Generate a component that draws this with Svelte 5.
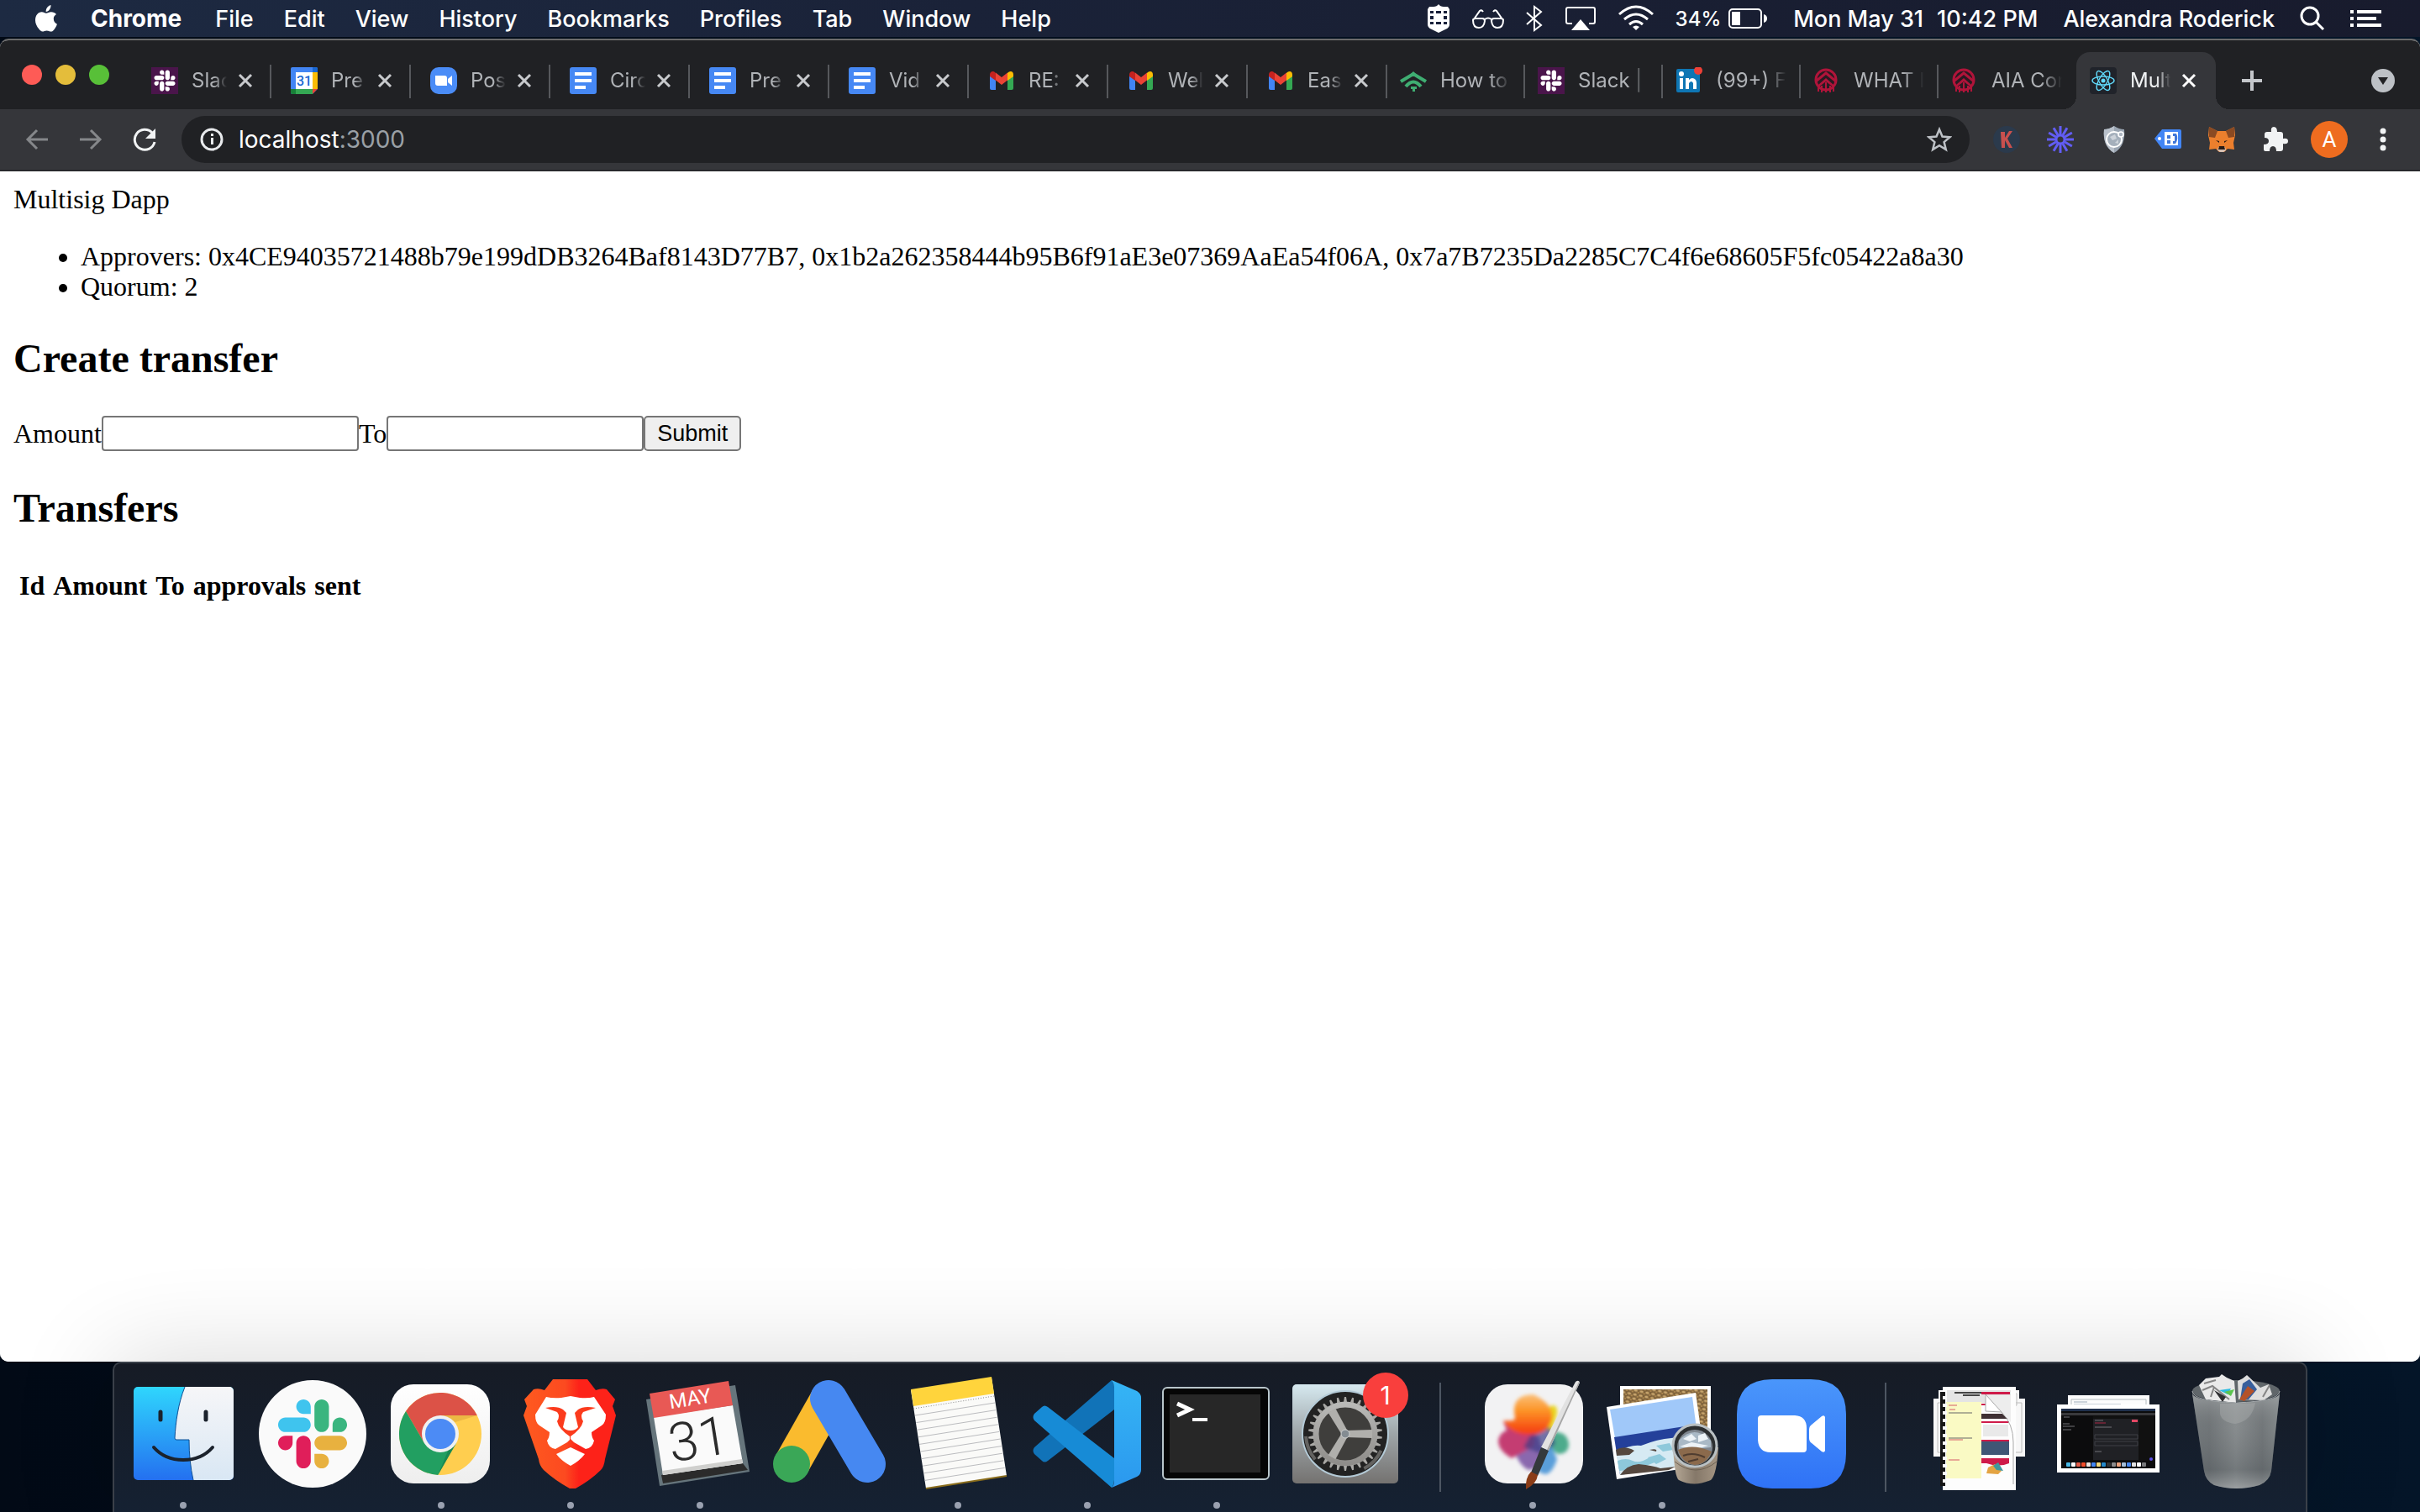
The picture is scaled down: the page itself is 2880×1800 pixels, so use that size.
<script>
  const menus = ['File', 'Edit', 'View', 'History', 'Bookmarks', 'Profiles', 'Tab', 'Window', 'Help'];

  const tabs = [
    { icon: 'slack', title: 'Slac', close: true },
    { icon: 'calendar', title: 'Pre', close: true },
    { icon: 'zoom', title: 'Pos', close: true },
    { icon: 'docs', title: 'Circ', close: true },
    { icon: 'docs', title: 'Pre', close: true },
    { icon: 'docs', title: 'Vid', close: true },
    { icon: 'gmail', title: 'RE:', close: true },
    { icon: 'gmail', title: 'Wel', close: true },
    { icon: 'gmail', title: 'Eas', close: true },
    { icon: 'tree', title: 'How to', close: false },
    { icon: 'slack', title: 'Slack |', close: false },
    { icon: 'linkedin', title: '(99+) F', close: false },
    { icon: 'aia', title: 'WHAT I', close: false },
    { icon: 'aia', title: 'AIA Cor', close: false },
    { icon: 'react', title: 'Mult', close: true, active: true }
  ];

  const approvers = [
    '0x4CE94035721488b79e199dDB3264Baf8143D77B7',
    '0x1b2a262358444b95B6f91aE3e07369AaEa54f06A',
    '0x7a7B7235Da2285C7C4f6e68605F5fc05422a8a30'
  ];
  const columns = ['Id', 'Amount', 'To', 'approvals', 'sent'];

  const slackPaths = [
    { d: 'M25.8 77.6c0 7.1-5.8 12.9-12.9 12.9S0 84.7 0 77.6s5.8-12.9 12.9-12.9h12.9v12.9zm6.5 0c0-7.1 5.8-12.9 12.9-12.9s12.9 5.8 12.9 12.9v32.3c0 7.1-5.8 12.9-12.9 12.9s-12.9-5.8-12.9-12.9V77.6z', c: '#e01e5a' },
    { d: 'M45.2 25.8c-7.1 0-12.9-5.8-12.9-12.9S38.1 0 45.2 0s12.9 5.8 12.9 12.9v12.9H45.2zm0 6.5c7.1 0 12.9 5.8 12.9 12.9s-5.8 12.9-12.9 12.9H12.9C5.8 58.1 0 52.3 0 45.2s5.8-12.9 12.9-12.9h32.3z', c: '#3fc4ee' },
    { d: 'M97 45.2c0-7.1 5.8-12.9 12.9-12.9s12.9 5.8 12.9 12.9-5.8 12.9-12.9 12.9H97V45.2zm-6.5 0c0 7.1-5.8 12.9-12.9 12.9s-12.9-5.8-12.9-12.9V12.9C64.7 5.8 70.5 0 77.6 0s12.9 5.8 12.9 12.9v32.3z', c: '#3ab57f' },
    { d: 'M77.6 97c7.1 0 12.9 5.8 12.9 12.9s-5.8 12.9-12.9 12.9-12.9-5.8-12.9-12.9V97h12.9zm0-6.5c-7.1 0-12.9-5.8-12.9-12.9s5.8-12.9 12.9-12.9h32.3c7.1 0 12.9 5.8 12.9 12.9s-5.8 12.9-12.9 12.9H77.6z', c: '#e8b13f' }
  ];

  const range = (n) => Array.from({ length: n }, (_, i) => i);

  const dock = [
    { name: 'Finder', icon: 'finder', running: true },
    { name: 'Slack', icon: 'slack' },
    { name: 'Google Chrome', icon: 'chrome', running: true },
    { name: 'Brave', icon: 'brave', running: true },
    { name: 'Calendar', icon: 'calendar', running: true },
    { name: 'Google Ads', icon: 'ads' },
    { name: 'Notes', icon: 'notes', running: true },
    { name: 'Visual Studio Code', icon: 'code', running: true },
    { name: 'Terminal', icon: 'terminal', running: true },
    { name: 'System Preferences', icon: 'settings' },
    { divider: true },
    { name: 'Pixelmator', icon: 'pixelmator', running: true },
    { name: 'Preview', icon: 'preview', running: true },
    { name: 'Zoom', icon: 'zoom' },
    { divider: true },
    { name: 'Documents', icon: 'documents' },
    { name: 'Screenshots', icon: 'screens' },
    { name: 'Trash', icon: 'trash' }
  ];
</script>

{#snippet favicon(kind)}
  <svg class="favicon" viewBox="0 0 32 32" aria-hidden="true">
    {#if kind === 'slack'}
      <rect width="32" height="32" fill="#4a154b" />
      <g transform="translate(3.5 3.5) scale(0.204)" fill="#fff">
        {#each slackPaths as p}<path d={p.d} />{/each}
      </g>
    {:else if kind === 'calendar'}
      <rect width="32" height="32" rx="2" fill="#4285f4" />
      <path d="M26 0h4a2 2 0 0 1 2 2v4h-6z" fill="#1967d2" />
      <path d="M26 6h6v20h-6z" fill="#fbbc04" />
      <path d="M26 26h6l-6 6z" fill="#ea4335" />
      <path d="M32 26v6h-6z" fill="#202124" />
      <path d="M6 26h20v6H6z" fill="#34a853" />
      <path d="M0 26h6v6H2a2 2 0 0 1-2-2z" fill="#188038" />
      <path d="M6 6h20v20H6z" fill="#fff" />
      <text x="16" y="22" text-anchor="middle" font-family="Roboto, sans-serif" font-size="16" font-weight="500" fill="#1967d2">31</text>
    {:else if kind === 'zoom'}
      <rect width="32" height="32" rx="10" fill="#4a8cf7" />
      <path d="M6 10h11a3 3 0 0 1 3 3v9H9a3 3 0 0 1-3-3zM21 14l5-4v12l-5-4z" fill="#fff" />
    {:else if kind === 'docs'}
      <rect width="32" height="32" rx="3" fill="#4688f4" />
      <path d="M6 6h20v4H6zM6 14h20v4H6zM6 22h13v4H6z" fill="#fff" />
    {:else if kind === 'gmail'}
      <path d="M2 9v16a2 2 0 0 0 2 2h5V14z" fill="#4285f4" />
      <path d="M23 27h5a2 2 0 0 0 2-2V9l-7 5z" fill="#34a853" />
      <path d="M2 9v0c0-4 4-5 6-3l1 1v9l-7-5z" fill="#c5221f" />
      <path d="M23 7l1-1c3-2 6-1 6 3v2l-7 5z" fill="#fbbc04" />
      <path d="M9 6.500l7 5.500 7-5.500V15.500l-7 5.500-7-5.500z" fill="#ea4335" />
    {:else if kind === 'tree'}
      <g fill="none" stroke="#3fae72" stroke-width="4">
        <path d="M1 17L16 8l15 9" />
        <path d="M7 23Q16 12 25 23" stroke-width="4" />
      </g>
      <path d="M16 5l6 6H10zM13 23h7v3h-7zM15 26h3v3h-3z" fill="#3fae72" />
    {:else if kind === 'linkedin'}
      <rect x="1" y="2" width="28" height="28" rx="2" fill="#0e76b4" />
      <path d="M5 13h4v13H5zM12 13h4v2q4-4 8 0 1 2 1 4v7h-4v-7q-2-4-5 0v7h-4z" fill="#fff" />
      <circle cx="7" cy="8" r="3" fill="#fff" />
      <circle cx="27" cy="4" r="5" fill="#ee4037" />
    {:else if kind === 'aia'}
      <circle cx="15" cy="15" r="12" fill="#2a1a22" stroke="#b0143a" stroke-width="3" />
      <path d="M4 14l11-9 11 9v4l-11-9-11 9zM6 21l9-8 9 8v3l-9-7-9 7z" fill="#b0143a" />
      <path d="M6 23v6M10 22v8M15 18v12M20 22v8M24 23v6" fill="none" stroke="#b0143a" stroke-width="2" />
    {:else}
      <rect width="32" height="32" rx="4" fill="#20232a" />
      <g fill="none" stroke="#61dafb" stroke-width="1.400">
        <ellipse cx="16" cy="16" rx="13" ry="5" />
        <ellipse cx="16" cy="16" rx="13" ry="5" transform="rotate(60 16 16)" />
        <ellipse cx="16" cy="16" rx="13" ry="5" transform="rotate(120 16 16)" />
      </g>
      <circle cx="16" cy="16" r="2.500" fill="#61dafb" />
    {/if}
  </svg>
{/snippet}

{#snippet dockIcon(kind)}
  <svg class="app-icon" viewBox="0 0 154 153" aria-hidden="true">
    {#if kind === 'finder'}
      <defs>
        <linearGradient id="fl" x2="0" y2="1"><stop stop-color="#2fd6fd" /><stop offset="1" stop-color="#2470f0" /></linearGradient>
        <linearGradient id="fr" x2="0" y2="1"><stop stop-color="#f6f6f8" /><stop offset="1" stop-color="#d9e7f4" /></linearGradient>
      </defs>
      <rect x="18" y="28" width="119" height="111" rx="5" fill="url(#fl)" />
      <path d="M79 28C71 48 68 70 67 89q0 2 2 2h15q0 26 5 48h43a5 5 0 0 0 5-5V33a5 5 0 0 0-5-5z" fill="url(#fr)" />
      <path d="M79 28C71 48 68 70 67 89q0 2 2 2h15q0 26 5 48" fill="none" stroke="#0d4f94" stroke-width="1" />
      <path d="M50 58v9M104 58v9" stroke="#1b222c" stroke-width="5" stroke-linecap="round" />
      <path d="M42 100q13 15 35 15t35-15" fill="none" stroke="#1b222c" stroke-width="4" stroke-linecap="round" />
    {:else if kind === 'slack'}
      <circle cx="77" cy="84" r="64" fill="#fafafa" />
      <g transform="translate(36 43) scale(0.668)">
        {#each slackPaths as p}<path d={p.d} fill={p.c} />{/each}
      </g>
    {:else if kind === 'chrome'}
      <defs><linearGradient id="cw" x2="0" y2="1"><stop stop-color="#fff" /><stop offset="1" stop-color="#eee" /></linearGradient></defs>
      <rect x="17" y="25" width="118" height="118" rx="27" fill="url(#cw)" />
      <g transform="translate(76 84)">
        <circle r="49" fill="#ffce4f" />
        <path d="M43.800-22A49 49 0 0 0-41-26.900L-19 11 0-22z" fill="#dc5247" />
        <path d="M-41-26.900A49 49 0 0 0-2.800 48.900L19 11-19 11z" fill="#229f61" />
        <path d="M0-22h43.800l-26 8z" fill="#d9a23a" opacity=".5" />
        <path d="M19 11L-2.800 48.900 10 18z" fill="#157c48" opacity=".6" />
        <circle r="22" fill="#f1f1f1" />
        <circle r="18" fill="#4c8bf5" />
      </g>
    {:else if kind === 'brave'}
      <defs><linearGradient id="bv"><stop stop-color="#ff5a1f" /><stop offset=".45" stop-color="#fc4a20" /><stop offset=".6" stop-color="#fd2219" /></linearGradient></defs>
      <path d="M56 19H97l10 13q8-3 13-1l10 12-3 8 4 11-13 52q-1 9-5 13-12 12-30 22h-7q-18-10-31-22-5-5-6-13L21 62l4-11-3-8 11-12q6-2 13 1z" fill="url(#bv)" />
      <path d="M48 40q8 2 18 1l11-2 11 2q10 1 17-1l14 21q0 10-5 13l-12 8q0 6 3 10-2 9-10 10l-14-8-4-4-4 4-14 8q-8-1-10-10 3-4 3-10l-12-8q-5-3-5-13z" fill="#fff" />
      <path d="M47 53q14-3 21 2l4 4-4 17q3 4 9 4t9-4l-4-17 4-4q7-5 21-2l-15 5q-4 5 0 11-2 9-15 18v6h-1v-6Q63 78 61 69q4-6 0-11z" fill="#fb3b1d" />
      <path d="M77 100l17 8q-6 8-17 14-11-6-17-14z" fill="#fff" />
    {:else if kind === 'calendar'}
      <path d="M13 43L119 26l17 103-107 17z" fill="#66757c" />
      <path d="M31 133l97-14 6 8-101 16z" fill="#2b2b2b" />
      <path d="M22 64l94-14 12 69-95 14z" fill="#fafafa" />
      <path d="M32 128l95-14 1 5-95 14z" fill="#cfcfcd" />
      <path d="M17 36l94-15 5 29-94 15z" fill="#e85955" />
      <g transform="rotate(-9 77 84)" text-anchor="middle" font-family="Roboto, sans-serif">
        <text x="72" y="49" font-size="24" fill="#fff">MAY</text>
        <text x="74" y="112" font-size="64" font-weight="300" fill="#2b2b2b">31</text>
      </g>
    {:else if kind === 'ads'}
      <path d="M76 42L32 120" stroke="#fabb2e" stroke-width="43" />
      <circle cx="32" cy="120" r="22" fill="#3aa757" />
      <path d="M76 42l46 78" stroke="#4688f1" stroke-width="44" stroke-linecap="round" />
    {:else if kind === 'notes'}
      <path d="M21 32l96-15 18 117-96 15z" fill="#fafaf8" />
      <path d="M39 149l96-15" stroke="#8a6d1c" stroke-width="2" />
      <path d="M21 31l96-15 3 20-96 15z" fill="#ffd43c" />
      <path d="M24 54l96-15" stroke="#888" stroke-width="1" stroke-dasharray="1 2" />
      {#each range(10) as i}
        <path d="M26 62l95-15" transform="translate({i * 1.3} {i * 8.6})" stroke="#bbbcbf" stroke-width="1" />
      {/each}
    {:else if kind === 'code'}
      <defs><linearGradient id="vs" x2="0" y2="1"><stop stop-color="#35b5f5" /><stop offset="1" stop-color="#2b98ee" /></linearGradient></defs>
      <path d="M106 20q5 4 3 35L30 116q-4 3-7 0l-9-8q-3-4 0-8z" fill="#1173b8" />
      <path d="M106 148q5-4 3-35L30 52q-4-3-7 0l-9 8q-3 4 0 8z" fill="#178bd6" />
      <path d="M106 20l30 13q5 3 5 8v86q0 5-5 8l-30 13q3-3 3-8V29q0-5-3-9z" fill="url(#vs)" />
    {:else if kind === 'terminal'}
      <rect x="13" y="29" width="126" height="109" rx="5" fill="#060606" stroke="#b9c6cb" stroke-width="2" />
      <path d="M21 37h108v93H21z" fill="#272727" />
      <path d="M30 48l15 7-15 7" fill="none" stroke="#fff" stroke-width="5" />
      <path d="M48 67h18" stroke="#fff" stroke-width="4" />
    {:else if kind === 'settings'}
      <defs>
        <linearGradient id="sg" x2="0" y2="1"><stop stop-color="#d6e9f0" /><stop offset=".5" stop-color="#9ea5a8" /><stop offset="1" stop-color="#747270" /></linearGradient>
        <linearGradient id="sr" x2="0" y2="1"><stop stop-color="#b9b9b7" /><stop offset="1" stop-color="#8f8d8a" /></linearGradient>
      </defs>
      <rect x="13" y="25" width="126" height="118" rx="5" fill="url(#sg)" />
      <circle cx="76" cy="84" r="51" fill="#222" stroke="#b4cad6" stroke-width="2" />
      <circle cx="76" cy="84" r="47" fill="none" stroke="#8f8e8b" stroke-width="4" stroke-dasharray="30 64 30 400" transform="rotate(25 76 84)" opacity=".6" />
      <circle cx="76" cy="84" r="34" fill="#3f3e3c" />
      <circle cx="76" cy="84" r="35" fill="none" stroke="url(#sr)" stroke-width="7" />
      {#each range(30) as i}
        <path d="M74 46l1-6h2l1 6z" fill="#aaa9a6" transform="rotate({i * 12} 76 84)" />
      {/each}
      {#each [0, 120, 240] as a}
        <path d="M76 80l32-1v10l-32-1z" fill="#b0afac" transform="rotate({a} 76 84)" />
      {/each}
      <circle cx="76" cy="84" r="5" fill="#848c92" stroke="#ced0d0" stroke-width="1" />
    {:else if kind === 'pixelmator'}
      <defs>
        <filter id="soft" x="-20%" y="-20%" width="140%" height="140%"><feGaussianBlur stdDeviation="2" /></filter>
        <linearGradient id="or" x2="0" y2="1"><stop stop-color="#fbc07a" /><stop offset=".4" stop-color="#fd9426" /><stop offset="1" stop-color="#f4380f" /></linearGradient>
      </defs>
      <rect x="20" y="25" width="117" height="118" rx="27" fill="#f2f2f3" />
      <g filter="url(#soft)">
        <path d="M96 52q11-6 10 8l-6 22-14-6z" fill="#e8d51f" />
        <path d="M100 82q18-2 20 14 0 12-13 12l-16-12z" fill="#4eab8c" />
        <path d="M80 98l20 2 6 14q-4 14-12 18-10 0-13-8z" fill="#5a9fda" />
        <path d="M52 96l32-10 6 24q-6 16-18 17-12-5-20-31z" fill="#8a68ae" />
        <path d="M42 69q14-2 40 6l-4 24-26 14Q36 104 36 92q2-10 10-12z" fill="#c43e72" />
        <path d="M76 82l22-6 6 20-16 12-22-8z" fill="#3a3c86" opacity=".7" />
        <path d="M42 68q14 2 14-3-6-28 22-28 24 12 22 28-4 18-24 20-24 1-34-17z" fill="url(#or)" />
      </g>
      <path d="M128 22q4-3 5 1L96 104l-9-4z" fill="#e2e2e2" />
      <path d="M132 22l1 1L96 104l-2-1z" fill="#a6a6a6" />
      <path d="M87 100l9 4-13 30-8-4z" fill="#34393d" />
      <path d="M75 129l8 4q-1 10-14 17-1-14 6-21z" fill="#8a3c17" />
    {:else if kind === 'preview'}
      <defs>
        <linearGradient id="pb"><stop stop-color="#b7aa98" /><stop offset=".5" stop-color="#857869" /><stop offset="1" stop-color="#a59684" /></linearGradient>
        <pattern id="peb" width="7" height="5" patternUnits="userSpaceOnUse" patternTransform="rotate(12)"><rect width="7" height="5" fill="#7d6039" /><ellipse cx="2.500" cy="2" rx="2.300" ry="1.500" fill="#c8a56c" /><ellipse cx="6" cy="4" rx="1.500" ry="1" fill="#b08a50" /></pattern>
      </defs>
      <path d="M27 27h108v85H27z" fill="#fff" />
      <path d="M31 31h100v81H31z" fill="url(#peb)" />
      <path d="M11 52l106-17 12 86-106 17z" fill="#fff" />
      <path d="M15 55l98-15 5 38-97 11z" fill="#a0c8f9" />
      <path d="M20 88l97-15 7 44-97 16z" fill="#24409a" />
      <path d="M22 106q18-10 30-8 20-8 36-9l32-5 5 34-98 15z" fill="#d6eaf3" />
      <path d="M24 116q10-4 18 0t20-4l6 6-20 8-22 2zM70 98l16-3 4 8-12 2zM60 112l14-4 8 6-12 6z" fill="#5db3cc" opacity=".6" />
      <path d="M22 103q10-6 22 1l-6 5-15 1zM27 133q8-12 22-13 18 2 26 5l18-2-8 4zM62 103q10-2 8 2z" fill="#55483f" />
      <path d="M90 100q2 36 7 39 18 9 38 0 7-6 9-39z" fill="url(#pb)" />
      <path d="M92 117q25 20 50 0" fill="none" stroke="#6e6253" />
      <ellipse cx="116" cy="98" rx="26" ry="25" fill="#2c2f31" stroke="#bac1c4" stroke-width="3" />
      <circle cx="116" cy="100" r="21" fill="#7f8790" />
      <path d="M97 92q18-20 38 0l0 8-38 4z" fill="#a9b9c6" />
      <path d="M102 90l10-6 6 6-8 3zM120 94l12-4-4-7-8 3zM98 99l14-5 20 4-14 4z" fill="#edf3f7" />
      <path d="M96 103q18-8 40 2-6 15-20 16-15-2-20-18z" fill="#8b6a4c" />
      <path d="M102 110q12-5 26 2M108 117l12-3" fill="none" stroke="#4f3d30" stroke-width="2" />
    {:else if kind === 'zoom'}
      <defs><linearGradient id="zm" x2="0" y2="1"><stop stop-color="#4a96fb" /><stop offset="1" stop-color="#2f72f6" /></linearGradient></defs>
      <path d="M54 19h46q42 0 42 42v46q0 42-42 42H54q-42 0-42-42V61q0-42 42-42z" fill="url(#zm)" />
      <path d="M41 62h40q14 1 14 15v25q0 4-4 4H52q-14 0-15-15V66q0-4 4-4zM98 79q0-4 3-6l12-10q3-2 4 1v40q-1 3-4 1l-12-10q-3-2-3-6z" fill="#fff" />
    {:else if kind === 'documents'}
      <path d="M23 42h109v69H23zM29 32h96v20H29z" fill="#f7f7f7" />
      <path d="M28 47h100v59H28zM32 36h90v14H32z" fill="none" stroke="#bcbcbc" />
      <path d="M34 28h87v123H34z" fill="#fdfdfd" />
      <path d="M39 32h76v15H39z" fill="#e4e4e4" />
      <path d="M48 35h34M58 38h20" stroke="#444" stroke-width="2" />
      <path d="M38 46h42v91H38z" fill="#fafac4" />
      <path d="M41 50h10M42 55h7M41 91h17M41 115h13" stroke="#d55a68" stroke-width="1" />
      <path d="M41 59h28M41 89h28" stroke="#666" />
      <path d="M80 34h34v3H80z" fill="#cf1b49" />
      <path d="M80 48h33v2H80zM80 69h33v2H80zM80 91h33v2H80zM80 113h33v6q-12 5-27 0h-6z" fill="#cf1b49" />
      <path d="M80 60h33v6H80z" fill="#3f3033" />
      <path d="M82 73h30v14H82z" fill="#e9e9e9" />
      <path d="M80 93h33v16H80z" fill="#3f5675" />
      <path d="M88 124l8-4 8 8-4 4-14-1z" fill="#e4a443" />
      <path d="M94 122l6-4 6 10-8-1z" fill="#40979c" />
      <path d="M83 38l32 32V38z" fill="#ededed" />
      <path d="M85 37v20l19 1z" fill="#fff" stroke="#aaa" />
      <path d="M104 58q14 14 14 36v50" fill="none" stroke="#aaa" />
      <path d="M31 34h6v112h-6z" fill="#161616" />
      {#each range(12) as i}<rect x="34" y={39 + i * 9} width="5" height="4" fill="#fafafa" />{/each}
    {:else if kind === 'screens'}
      <path d="M30 38h97v20H30z" fill="#fcfcfc" />
      <path d="M34 43h89v8H34z" fill="none" stroke="#b4bcc0" />
      <path d="M37 46h16M37 49h56" stroke="#9cabb8" />
      <path d="M17 49h122v81H17z" fill="#fff" />
      <path d="M22 54h112v71H22z" fill="#0c0c0d" />
      <path d="M22 54h112v3H22z" fill="#20304c" />
      <path d="M22 59h112v3H22z" fill="#39393c" />
      <path d="M42 63h91v53H60V63z" fill="#111" />
      <path d="M60 66h54v49H60z" fill="#202125" />
      <path d="M62 68h10M62 76h20M25 64h7M24 72h8M24 75h14M24 79h10M62 105h8" stroke="#737378" />
      <path d="M62 85h51v5H62zM62 93h51v5H62z" fill="none" stroke="#3e4047" />
      <path d="M106 67h7v3h-7z" fill="#e54865" />
      <path d="M62 71h13" stroke="#aa2945" />
      <circle cx="129" cy="114" r="2" fill="#5c50e8" />
      {#each ['#47b8e6', '#fff', '#df5a47', '#f14c29', '#ece2dc', '#4285f4', '#f0d67b', '#2489ca', '#333', '#8b8b8b', '#e9a07b', '#a4bdd7', '#4585ed', '#e1e1e1', '#fff', '#77787a'] as c, i}
        <rect x={28 + i * 6} y="118" width="5" height="5" rx="1" fill={c} />
      {/each}
    {:else}
      <defs>
        <linearGradient id="tr"><stop stop-color="#777d80" /><stop offset=".2" stop-color="#72777a" /><stop offset=".5" stop-color="#8f9496" /><stop offset=".8" stop-color="#74797c" /><stop offset="1" stop-color="#8a9092" /></linearGradient>
        <linearGradient id="tb" x2="0" y2="1"><stop stop-color="#a5a9ab" stop-opacity=".7" /><stop offset=".35" stop-color="#6a6e70" stop-opacity=".2" /><stop offset=".8" stop-color="#4a5054" stop-opacity=".4" /><stop offset="1" stop-color="#a9adaf" stop-opacity=".5" /></linearGradient>
      </defs>
      <ellipse cx="76" cy="33" rx="52" ry="13" fill="#60666a" />
      <path d="M32 26l8-8 16-2 3-3 6 4 9 4 2 26-36-4z" fill="#e9e9e9" />
      <path d="M79 43l-1-22 6-3 5-4 16 15 10-4 4 12-10 7z" fill="#dedede" />
      <path d="M56 32l14-2-4 7z" fill="#2dbce0" />
      <path d="M62 34l12-3-4 8z" fill="#5cc44e" />
      <path d="M84 24l8-5 9 12-10 12-10 0z" fill="#385f9c" />
      <path d="M90 27l8 6-12 12-6-2z" fill="#b4522a" />
      <path d="M38 24l14-4M36 32l12-5 20 16M46 40l4-12M108 40l8-14" stroke="#858585" stroke-width="2" fill="none" />
      <path d="M50 32l14 8-4 6z" fill="#2f2f31" />
      <path d="M24 36q2 9 52 11 50-2 52-11L118 128q-2 12-14 17-28 8-54 0-10-5-12-17z" fill="url(#tr)" />
      <path d="M24 36q2 9 52 11 50-2 52-11L118 128q-2 12-14 17-28 8-54 0-10-5-12-17z" fill="url(#tb)" />
      <path d="M24 33q0 12 52 14 52-2 52-14" fill="none" stroke="#a6abad" stroke-width="1" />
      <path d="M57 48q36 0 42-1-4 22-24 25-16-2-18-12z" fill="#b4b6b7" opacity=".35" />
    {/if}
  </svg>
{/snippet}

<div class="desktop">
  <nav class="menubar" aria-label="Menu bar">
    <button class="apple" aria-label="Apple menu">
      <svg viewBox="0 0 26 32" width="26" height="32"><path d="M18.500 0c.2 2.700-.8 4.800-2.200 6.200-1.200 1.300-2.700 1.800-3.600 1.700-.3-2 .7-4.300 2-5.700C15.800 1 17.400.2 18.500 0zM25 10.900c-2.300 1.500-3.300 3.300-3.200 5.700.1 2.900 1.500 4.900 4.100 6.100-.7 2.200-1.900 4.300-3.300 6.200-1.200 1.600-2.400 2.600-4 2.600-1.900 0-2.700-1.100-5-1.100s-3.300 1.100-5 1.100-3-1.200-4.200-2.900C1.800 25.300 0 21.800 0 18.200c0-6.200 3.600-9.900 7.600-9.900 2.200 0 4 1.400 5.300 1.400 1.500 0 3.500-1.500 6-1.500 2.400 0 4.600 1 6.100 2.700z" fill="#fff" /></svg>
    </button>
    <button class="strong">Chrome</button>
    {#each menus as m}<button>{m}</button>{/each}
    <span class="spacer"></span>
    <div class="extras">
      <div class="status">
        <svg viewBox="0 0 28 34" width="28" height="34"><path d="M14 0q2 3 6 3h5l2 3v18q0 4-5 6l-8 4-8-4q-5-2-5-6V6l2-3h5q4 0 6-3z" fill="#fff" /><path d="M4 8h4v3H4zM11 8h6v3h-6zM20 8h4v3h-4zM4 14h4v4H4zM20 14h4v4h-4zM4 21h4v3H4zM11 21h6v3h-6zM20 21h4v3h-4z" fill="#18203a" /></svg>
        <svg viewBox="0 0 38 34" width="38" height="34" fill="none" stroke="#fff" stroke-width="2"><path d="M1 19q0-2 3-2h8q3 0 3 3-1 8-7 8-7 0-7-9zM37 19q0-2-3-2h-8q-3 0-3 3 1 8 7 8 7 0 7-9zM15 18q4-3 8 0M2 18l7-10q2-2 4 1M36 18L29 8q-2-2-4 1" /></svg>
        <svg viewBox="0 0 20 34" width="20" height="34" fill="none" stroke="#fff" stroke-width="2"><path d="M1 10l17 15-8 6V3l8 6L1 24" /></svg>
        <svg viewBox="0 0 38 34" width="38" height="34"><path d="M9 23H4a2 2 0 0 1-2-2V6a2 2 0 0 1 2-2h30a2 2 0 0 1 2 2v15a2 2 0 0 1-2 2h-5" fill="none" stroke="#fff" stroke-width="2" /><path d="M19 18l11 13H8z" fill="#fff" /></svg>
        <svg viewBox="0 0 42 34" width="42" height="34" fill="none" stroke="#fff" stroke-width="3"><path d="M1 12q20-18 40 0M7 18q14-12 28 0M13 24q8-7 16 0" /><path d="M17 27q4-3 8 0l-4 4z" fill="#fff" stroke="none" /></svg>
        <span class="battery"><span>34%</span>
          <svg viewBox="0 0 48 26" width="48" height="26"><rect x="2" y="2" width="38" height="22" rx="4" fill="none" stroke="#fff" stroke-width="2" /><path d="M5 5h10v16H5zM43 8q4 1 4 5t-4 5z" fill="#fff" /></svg>
        </span>
      </div>
      <time class="clock"><span>Mon May 31</span><span>10:42 PM</span></time>
      <button>Alexandra Roderick</button>
      <button aria-label="Spotlight">
        <svg viewBox="0 0 30 30" width="30" height="30" fill="none" stroke="#fff" stroke-width="3"><circle cx="12" cy="12" r="10" /><path d="M19 19l9 9" /></svg>
      </button>
      <button aria-label="Notification Center">
        <svg viewBox="0 0 37 22" width="37" height="22" fill="#fff"><path d="M0 1h4v4H0zM8 1h29v4H8zM0 9h4v4H0zM8 9h23v4H8zM0 17h4v4H0zM8 17h29v4H8z" /></svg>
      </button>
    </div>
  </nav>

  <div class="window">
    <header class="strip">
      <div class="lights">
        <button class="light red" aria-label="Close window"></button>
        <button class="light yellow" aria-label="Minimise window"></button>
        <button class="light green" aria-label="Zoom window"></button>
      </div>
      <div class="tabs">
        {#each tabs as t, i}
          <div class="tab" class:narrow={!t.close} class:active={t.active} class:plain={i === 13}>
            {@render favicon(t.icon)}
            <span class="title">{t.title}</span>
            {#if t.close}
              <button class="close" aria-label="Close tab">
                <svg viewBox="0 0 18 18" width="18" height="18"><path d="M2 2l14 14M16 2L2 16" stroke="currentColor" stroke-width="3" /></svg>
              </button>
            {/if}
          </div>
        {/each}
      </div>
      <button class="new" aria-label="New tab"><svg viewBox="0 0 24 24" width="24" height="24"><path d="M12 0v24M0 12h24" stroke="#c4c7cb" stroke-width="4" /></svg></button>
      <span class="spacer"></span>
      <button class="drop" aria-label="Search tabs"><svg viewBox="0 0 28 28" width="28" height="28"><circle cx="14" cy="14" r="14" fill="#bdc1c6" /><path d="M8 10h12l-6 9z" fill="#202124" /></svg></button>
    </header>

    <div class="toolbar">
      <button class="tool" aria-label="Back"><svg viewBox="0 0 28 28" width="28" height="28" fill="none" stroke="#85878a" stroke-width="3"><path d="M27 14H3M14 3L3 14l11 11" /></svg></button>
      <button class="tool" aria-label="Forward"><svg viewBox="0 0 28 28" width="28" height="28" fill="none" stroke="#85878a" stroke-width="3"><path d="M1 14h24M14 3l11 11-11 11" /></svg></button>
      <button class="tool" aria-label="Reload"><svg viewBox="0 0 28 28" width="28" height="28"><path d="M23 6a12 12 0 1 0 3 11" fill="none" stroke="#f1f3f4" stroke-width="3" /><path d="M27 1v12H15z" fill="#f1f3f4" /></svg></button>
      <div class="omnibox">
        <svg viewBox="0 0 28 28" width="28" height="28"><circle cx="14" cy="14" r="12" fill="none" stroke="#e8eaed" stroke-width="3" /><path d="M13 12h3v8h-3zM13 7h3v3h-3z" fill="#e8eaed" /></svg>
        <span class="url">localhost<span>:3000</span></span>
        <span class="spacer"></span>
        <button class="star" aria-label="Bookmark"><svg viewBox="0 0 30 30" width="30" height="30"><path d="M15 3l3.500 8.500 9 .7-6.900 5.900 2.200 8.900-7.800-4.800-7.800 4.800 2.200-8.900-6.900-5.900 9-.7z" fill="none" stroke="#bdc1c6" stroke-width="2.500" /></svg></button>
      </div>
      <div class="extensions">
        <button aria-label="Keywords"><svg viewBox="0 0 32 32" width="32" height="32"><circle cx="16" cy="16" r="16" fill="#2b3a4c" /><path d="M9 7h5v7l5-8h4l-6 9 6 11h-4l-5-9v9h-4z" fill="#c9504e" /></svg></button>
        <button aria-label="Loom"><svg viewBox="0 0 32 32" width="32" height="32" stroke="#625df5" stroke-width="3" fill="none"><circle cx="16" cy="16" r="5" />{#each range(12) as i}<path d="M16 0v10" transform="rotate({i * 30} 16 16)" />{/each}</svg></button>
        <button aria-label="Shield"><svg viewBox="0 0 32 32" width="32" height="32"><path d="M16 0q6 4 12 4 2 20-12 28Q2 24 4 4q6 0 12-4z" fill="#9aa5b2" /><path d="M16 0q-6 4-12 4Q2 24 16 32z" fill="#b9c1cb" /><circle cx="16" cy="16" r="9" fill="#a4afbb" stroke="#fff" stroke-width="2" /><path d="M11 13l6-3 2 5-5 2zM17 20l4-4v5z" fill="#cdd3da" /><circle cx="24" cy="10" r="3" fill="#aeb7c2" stroke="#fff" stroke-width="1.500" /></svg></button>
        <button aria-label="Tag assistant"><svg viewBox="0 0 32 32" width="32" height="32"><path d="M0 15L9 4h21q2 0 2 2v19q0 2-2 2H9z" fill="#4285f4" /><circle cx="6" cy="15" r="2" fill="#fff" /><path d="M12 7h16v16H12z" fill="#fff" /><path d="M15 11h4v4h-4zM15 17h4v4h-4zM22 9h4q3 6-1 12h-3v-3h2v-6h-2z" fill="#4076d8" /></svg></button>
        <button aria-label="MetaMask"><svg viewBox="0 0 32 32" width="32" height="32"><path d="M1 1l10 5h10l10-5 1 10-2 9 1 8-8-1-4 4h-6l-4-4-8 1 1-8-2-9z" fill="#ec7f2d" /><path d="M1 1l10 5-3 8-7-1zM31 1L21 6l3 8 7-1z" fill="#8b4a22" /><path d="M12 25h8l1 4-3 2h-4l-3-2z" fill="#d5bfb2" /><path d="M13 24h6l1 4h-8zM9 17l4 1v2zM23 17l-4 1v2z" fill="#2a1b14" /></svg></button>
        <button aria-label="Extensions"><svg viewBox="0 0 30 30" width="30" height="30"><path d="M2 9q0-3 3-3h5q-1-6 3-6t4 6h4q3 0 3 3v5q6-1 6 3t-6 3v6q0 3-3 3h-5q0-6-4-6t-4 6H3q-2 0-2-2v-6q6 0 6-4t-5-4z" fill="#f1f3f4" /></svg></button>
        <button class="avatar" aria-label="Profile A">A</button>
        <button aria-label="More"><svg viewBox="0 0 8 28" width="8" height="28" fill="#f1f3f4"><circle cx="4" cy="4" r="3.500" /><circle cx="4" cy="14" r="3.500" /><circle cx="4" cy="24" r="3.500" /></svg></button>
      </div>
    </div>

    <main class="page">
      <div>Multisig Dapp</div>
      <ul>
        <li>Approvers: {approvers.join(', ')}</li>
        <li>Quorum: 2</li>
      </ul>
      <h2>Create transfer</h2>
      <form onsubmit={(e) => e.preventDefault()}>
        <label for="amount">Amount</label><input id="amount" type="text" /><label for="to">To</label><input id="to" type="text" /><button type="submit">Submit</button>
      </form>
      <h2>Transfers</h2>
      <table>
        <thead><tr>{#each columns as c}<th>{c}</th>{/each}</tr></thead>
      </table>
    </main>
  </div>

  <footer class="dock">
    {#each dock as d}
      {#if d.divider}
        <span class="divider"></span>
      {:else}
        <button class="app" aria-label={d.name}>
          {@render dockIcon(d.icon)}
          {#if d.icon === 'settings'}<span class="badge">1</span>{/if}
          {#if d.running}<span class="dot"></span>{/if}
        </button>
      {/if}
    {/each}
  </footer>
</div>

<style>
  :global(body) {
    background: #020a16;
  }
  button {
    background: none;
    border: 0;
    padding: 0;
    color: inherit;
    font: inherit;
  }
  svg {
    display: block;
    flex: none;
  }
  .desktop {
    min-height: 100vh;
    display: flex;
    flex-direction: column;
    overflow: hidden;
    font-family: Inter, 'Liberation Sans', sans-serif;
    background: linear-gradient(90deg, #020a16, #041528);
  }
  .spacer {
    flex: 1;
  }

  .menubar {
    height: 44px;
    display: flex;
    align-items: center;
    gap: 36px;
    padding: 0 46px 0 42px;
    background: linear-gradient(90deg, #1d2a42, #1a2238 40%, #181b2d);
    color: #fff;
    font-size: 27px;
    font-weight: 500;
    white-space: nowrap;
  }
  .strong {
    padding: 0 4px;
    font-size: 28px;
    font-weight: 700;
  }
  .extras {
    display: flex;
    align-items: center;
    gap: 30px;
  }
  .status {
    display: flex;
    align-items: center;
    gap: 26px;
  }
  .battery {
    display: flex;
    align-items: center;
    gap: 8px;
    font-size: 24px;
  }
  .clock {
    display: flex;
    gap: 16px;
  }

  .window {
    flex: 1;
    display: flex;
    flex-direction: column;
    margin-top: 2px;
    border-top: 2px solid #6b6b6b;
    border-radius: 10px;
    overflow: hidden;
    background: #fff;
  }
  .strip {
    height: 82px;
    display: flex;
    align-items: center;
    background: #202124;
    padding-left: 26px;
  }
  .lights {
    display: flex;
    gap: 16px;
    width: 131px;
  }
  .light {
    width: 24px;
    height: 24px;
    border-radius: 50%;
  }
  .red { background: #fe5b56; }
  .yellow { background: #e4bd3b; }
  .green { background: #58c038; }
  .tabs {
    display: flex;
    align-self: stretch;
    padding-top: 14px;
  }
  .tab {
    position: relative;
    box-sizing: border-box;
    width: 166px;
    height: 68px;
    display: flex;
    align-items: center;
    padding-left: 23px;
    color: #b0b3b7;
  }
  .tab::after {
    content: '';
    position: absolute;
    right: 0;
    top: 15px;
    width: 2px;
    height: 40px;
    background: #56585c;
  }
  .tab.plain::after {
    display: none;
  }
  .tab.narrow {
    width: 164px;
    padding-left: 15px;
  }
  .favicon {
    width: 32px;
    height: 32px;
  }
  .title {
    width: 42px;
    margin: 0 13px 0 16px;
    overflow: hidden;
    white-space: nowrap;
    font-size: 24px;
    line-height: 32px;
    mask-image: linear-gradient(90deg, #000 65%, transparent);
  }
  .narrow .title {
    width: 84px;
    mask-image: linear-gradient(90deg, #000 70%, transparent);
  }
  .close {
    color: #c8cacd;
  }
  .active {
    background: #35363a;
    border-radius: 16px 16px 0 0;
    padding-left: 16px;
    color: #f1f3f4;
  }
  .active .title {
    width: 48px;
  }
  .tab.active::before,
  .tab.active::after {
    content: '';
    display: block;
    position: absolute;
    top: auto;
    bottom: 0;
    width: 16px;
    height: 16px;
  }
  .tab.active::before {
    left: -16px;
    background: radial-gradient(circle at 0 0, transparent 16px, #35363a 16px);
  }
  .tab.active::after {
    right: -16px;
    background: radial-gradient(circle at 100% 0, transparent 16px, #35363a 16px);
  }
  .active .close {
    color: #fff;
  }
  .new {
    margin: 14px 0 0 31px;
  }
  .drop {
    margin: 14px 30px 0 0;
  }

  .toolbar {
    height: 72px;
    display: flex;
    align-items: center;
    background: #35363a;
    border-bottom: 2px solid #28292c;
    padding: 0 12px 0 30px;
  }
  .tool {
    width: 28px;
    margin-right: 36px;
  }
  .omnibox {
    flex: 1;
    height: 56px;
    display: flex;
    align-items: center;
    box-sizing: border-box;
    padding: 0 21px 0 22px;
    margin-left: -6px;
    border-radius: 28px;
    background: #202124;
    color: #fff;
    font-size: 28px;
  }
  .url {
    margin-left: 18px;
  }
  .url span {
    color: #9aa0a6;
  }
  .extensions {
    display: flex;
    align-items: center;
    margin-left: 12px;
  }
  .extensions button {
    width: 64px;
    display: flex;
    justify-content: center;
  }
  .extensions .avatar {
    width: 44px;
    height: 44px;
    margin: 0 10px;
    align-items: center;
    border-radius: 50%;
    background: #ee6c1f;
    color: #fff;
    font: 26px Roboto, sans-serif;
  }

  .page {
    flex: 1;
    padding: 15px 16px;
    background: #fff;
    color: #000;
    font: 32px/36px 'Liberation Serif', serif;
  }
  ul {
    margin: 32px 0 0;
    padding-left: 80px;
  }
  h2 {
    margin: 40px 0;
    font-size: 48px;
    line-height: 56px;
  }
  form {
    display: flex;
    align-items: center;
    height: 42px;
  }
  input {
    box-sizing: border-box;
    width: 306px;
    height: 42px;
    padding: 2px 4px;
    border: 2px solid #767676;
    border-radius: 4px;
    background: #fff;
    font: 27px 'Liberation Sans', sans-serif;
  }
  form button {
    box-sizing: border-box;
    height: 42px;
    padding: 0 14px;
    border: 2px solid #767676;
    border-radius: 5px;
    background: #efefef;
    color: #000;
    font: 27px 'Liberation Sans', sans-serif;
  }
  table {
    border-spacing: 4px;
  }
  th {
    padding: 2px 3px;
    font-weight: 700;
  }

  .dock {
    position: relative;
    box-sizing: border-box;
    height: 179px;
    display: flex;
    margin: 0 134px;
    padding: 0 5px;
    border: 2px solid #3a4049;
    border-bottom: 0;
    border-radius: 10px 10px 0 0;
    background: linear-gradient(#161b25, #152132);
    box-shadow: 0 0 120px rgba(0, 0, 0, 0.16);
  }
  .app {
    position: relative;
    flex: 1 1 0;
    min-width: 0;
    display: flex;
    flex-direction: column;
    align-items: center;
  }
  .app-icon {
    width: 154px;
    height: 153px;
  }
  .badge {
    position: absolute;
    top: 11px;
    right: 3px;
    width: 54px;
    height: 54px;
    border-radius: 50%;
    background: #f93f3d;
    color: #fff;
    font-size: 30px;
    line-height: 54px;
    text-align: center;
  }
  .dot {
    width: 8px;
    height: 8px;
    margin-top: 12px;
    border-radius: 50%;
    background: #9aa1b0;
  }
  .divider {
    width: 2px;
    height: 130px;
    margin: 23px 33px 0 34px;
    background: #4d5662;
  }
</style>
